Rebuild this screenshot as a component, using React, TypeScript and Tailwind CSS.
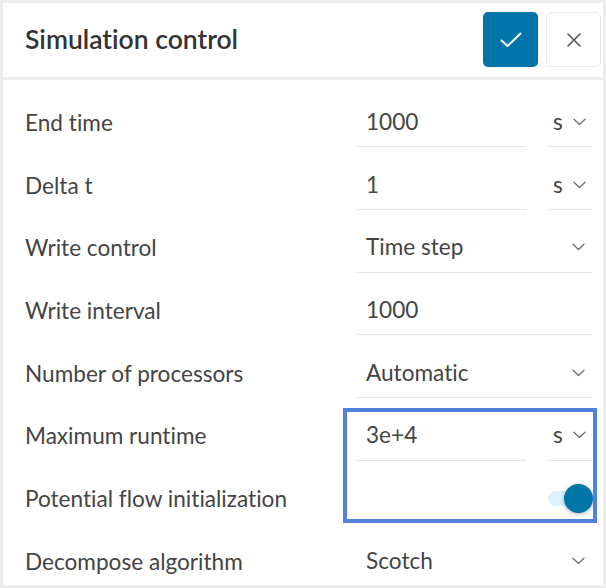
import React from "react";

const Chevron = () => (
  <svg width="13" height="8" viewBox="0 0 13 8" fill="none">
    <path d="M1 1.2 L6.5 6.5 L12 1.2" stroke="#707070" strokeWidth="1.3" strokeLinecap="round" strokeLinejoin="round" />
  </svg>
);

const Label = ({ children }: { children: React.ReactNode }) => (
  <div className="flex-1 text-[22.6px] text-[#444] whitespace-nowrap pt-[1px]">{children}</div>
);

const Row = ({ children }: { children: React.ReactNode }) => (
  <div className="h-[62.7px] shrink-0 flex items-center pl-[22px] pr-[11px]">{children}</div>
);

const InputUnit = ({ value }: { value: string }) => (
  <div className="w-[235px] flex gap-[21px]">
    <div className="w-[169px] h-[50px] flex items-center pl-[9px] border-b-[1.5px] border-[#e6e6e6] text-[22.6px] text-[#444]">
      {value}
    </div>
    <div className="w-[45px] h-[50px] flex items-center justify-between pl-[6px] pr-[6px] border-b-[1.5px] border-[#e6e6e6] text-[22.6px] text-[#444]">
      <span>s</span>
      <Chevron />
    </div>
  </div>
);

const Select = ({ value }: { value: string }) => (
  <div className="w-[235px] h-[50px] flex items-center justify-between pl-[9px] pr-[7px] border-b-[1.5px] border-[#e6e6e6] text-[22.6px] text-[#444]">
    <span>{value}</span>
    <Chevron />
  </div>
);

const Input = ({ value }: { value: string }) => (
  <div className="w-[235px] h-[50px] flex items-center pl-[9px] border-b-[1.5px] border-[#e6e6e6] text-[22.6px] text-[#444]">
    {value}
  </div>
);

export default function App() {
  return (
    <div
      className="w-[606px] h-[588px] border-[3px] border-[#ededed] overflow-hidden flex flex-col relative bg-white [font-variant-ligatures:none]"
      style={{ fontFamily: "Lato, 'Open Sans', sans-serif" }}
    >
      <div className="h-[77px] shrink-0 flex items-center justify-between pl-[22px] pr-[2px] border-b-[3px] border-[#ededed]">
        <div className="text-[26.5px] font-semibold text-[#333]">Simulation control</div>
        <div className="flex gap-[8px] mt-[-1px]">
          <button className="w-[55px] h-[55px] rounded-[5px] bg-[#0074a8] flex items-center justify-center">
            <svg width="22" height="16" viewBox="0 0 22 16" fill="none">
              <path d="M1.5 8.5 L7.5 14 L20.5 1.5" stroke="white" strokeWidth="2" strokeLinecap="round" strokeLinejoin="round" />
            </svg>
          </button>
          <button className="w-[55px] h-[55px] rounded-[5px] bg-white border border-[#e8e8e8] flex items-center justify-center">
            <svg width="14" height="14" viewBox="0 0 14 14" fill="none">
              <path d="M1 1 L13 13 M13 1 L1 13" stroke="#555" strokeWidth="1.6" strokeLinecap="round" />
            </svg>
          </button>
        </div>
      </div>
      <div className="pt-[11px] flex flex-col">
        <Row>
          <Label>End time</Label>
          <InputUnit value="1000" />
        </Row>
        <Row>
          <Label>Delta t</Label>
          <InputUnit value="1" />
        </Row>
        <Row>
          <Label>Write control</Label>
          <Select value="Time step" />
        </Row>
        <Row>
          <Label>Write interval</Label>
          <Input value="1000" />
        </Row>
        <Row>
          <Label>Number of processors</Label>
          <Select value="Automatic" />
        </Row>
        <Row>
          <Label>Maximum runtime</Label>
          <InputUnit value="3e+4" />
        </Row>
        <Row>
          <Label>Potential flow initialization</Label>
          <div className="relative w-[45px] h-[28px] mr-[-1px]">
            <div className="absolute left-0 top-[7px] w-[30px] h-[15px] rounded-full bg-[#dcf1fb]" />
            <div className="absolute right-0 top-0 w-[29px] h-[29px] rounded-full bg-[#0075a8] shadow-[0_1px_4px_rgba(0,0,0,0.3)]" />
          </div>
        </Row>
        <Row>
          <Label>Decompose algorithm</Label>
          <Select value="Scotch" />
        </Row>
      </div>
      <div className="absolute left-[340px] top-[405px] w-[254px] h-[115px] border-[4px] border-[#5281dc] pointer-events-none" />
    </div>
  );
}
